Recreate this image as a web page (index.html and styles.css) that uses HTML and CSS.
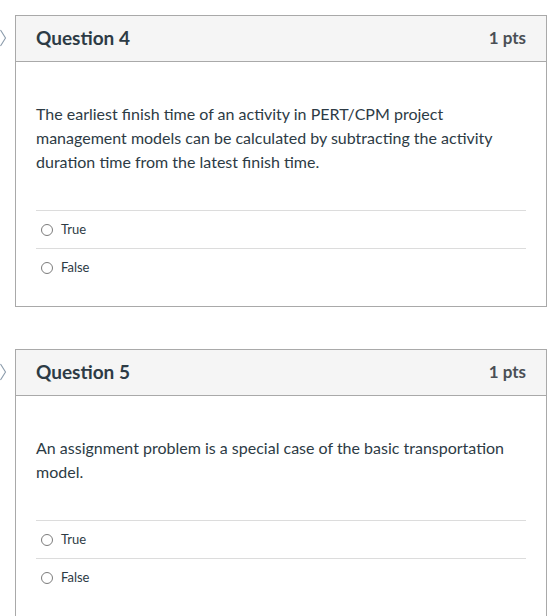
FILE: index.html
```html
<!DOCTYPE html>
<html>
<head>
<meta charset="utf-8">
<link rel="stylesheet" href="styles.css">
</head>
<body>
<div class="page">
  <div class="qrow">
    <div class="marker">
      <svg width="7" height="18" viewBox="0 0 7 18"><polyline points="0.5,1 5.5,9 0.5,17" fill="none" stroke="#8b9bab" stroke-width="1.1"/></svg>
    </div>
    <div class="card">
      <div class="card-head">
        <span class="q-title">Question 4</span>
        <span class="q-pts">1 pts</span>
      </div>
      <div class="card-body">
        <p class="q-text">The earliest finish time of an activity in PERT/CPM project management models can be calculated by subtracting the activity duration time from the latest finish time.</p>
        <div class="answers">
          <div class="answer"><span class="radio"></span><span class="label">True</span></div>
          <div class="answer"><span class="radio"></span><span class="label">False</span></div>
        </div>
      </div>
    </div>
  </div>
  <div class="qrow">
    <div class="marker">
      <svg width="7" height="18" viewBox="0 0 7 18"><polyline points="0.5,1 5.5,9 0.5,17" fill="none" stroke="#8b9bab" stroke-width="1.1"/></svg>
    </div>
    <div class="card">
      <div class="card-head">
        <span class="q-title">Question 5</span>
        <span class="q-pts">1 pts</span>
      </div>
      <div class="card-body">
        <p class="q-text">An assignment problem is a special case of the basic transportation model.</p>
        <div class="answers">
          <div class="answer"><span class="radio"></span><span class="label">True</span></div>
          <div class="answer"><span class="radio"></span><span class="label">False</span></div>
        </div>
      </div>
    </div>
  </div>
</div>
</body>
</html>
```
FILE: styles.css
```css
html, body {
  margin: 0;
  padding: 0;
  background: #fff;
}
body {
  font-family: Lato, "Liberation Sans", sans-serif;
  color: #2d3b45;
}
.page {
  padding-top: 15px;
  display: flex;
  flex-direction: column;
  gap: 42px;
}
.qrow {
  display: flex;
  align-items: flex-start;
}
.marker {
  width: 15px;
  height: 46px;
  display: flex;
  align-items: center;
  margin-top: 0;
}
.marker svg {
  display: block;
}
.card {
  width: 530px;
  border: 1px solid #a9a9a9;
  background: #fff;
}
.card-head {
  background: #f5f5f5;
  border-bottom: 1px solid #a9a9a9;
  height: 46px;
  box-sizing: border-box;
  display: flex;
  align-items: center;
  justify-content: space-between;
  padding: 0 20px 2px;
}
.q-title {
  font-size: 19px;
  font-weight: 700;
  color: #2d3b45;
}
.q-pts {
  font-size: 17px;
  font-weight: 700;
  color: #4a4f55;
}
.card-body {
  padding: 40px 20px 20px;
}
.q-text {
  margin: 0;
  font-size: 16px;
  line-height: 24px;
  color: #2d3b45;
}
.answers {
  margin-top: 36px;
}
.answer {
  border-top: 1px solid #dcdcdc;
  height: 37px;
  display: flex;
  align-items: center;
  padding-left: 5px;
}
.radio {
  width: 12px;
  height: 12px;
  border: 1px solid #7c7c7c;
  border-radius: 50%;
  box-sizing: border-box;
  margin-right: 8px;
  background: #fff;
}
.label {
  font-size: 13px;
  color: #2d3b45;
  position: relative;
  top: -1px;
}
```
